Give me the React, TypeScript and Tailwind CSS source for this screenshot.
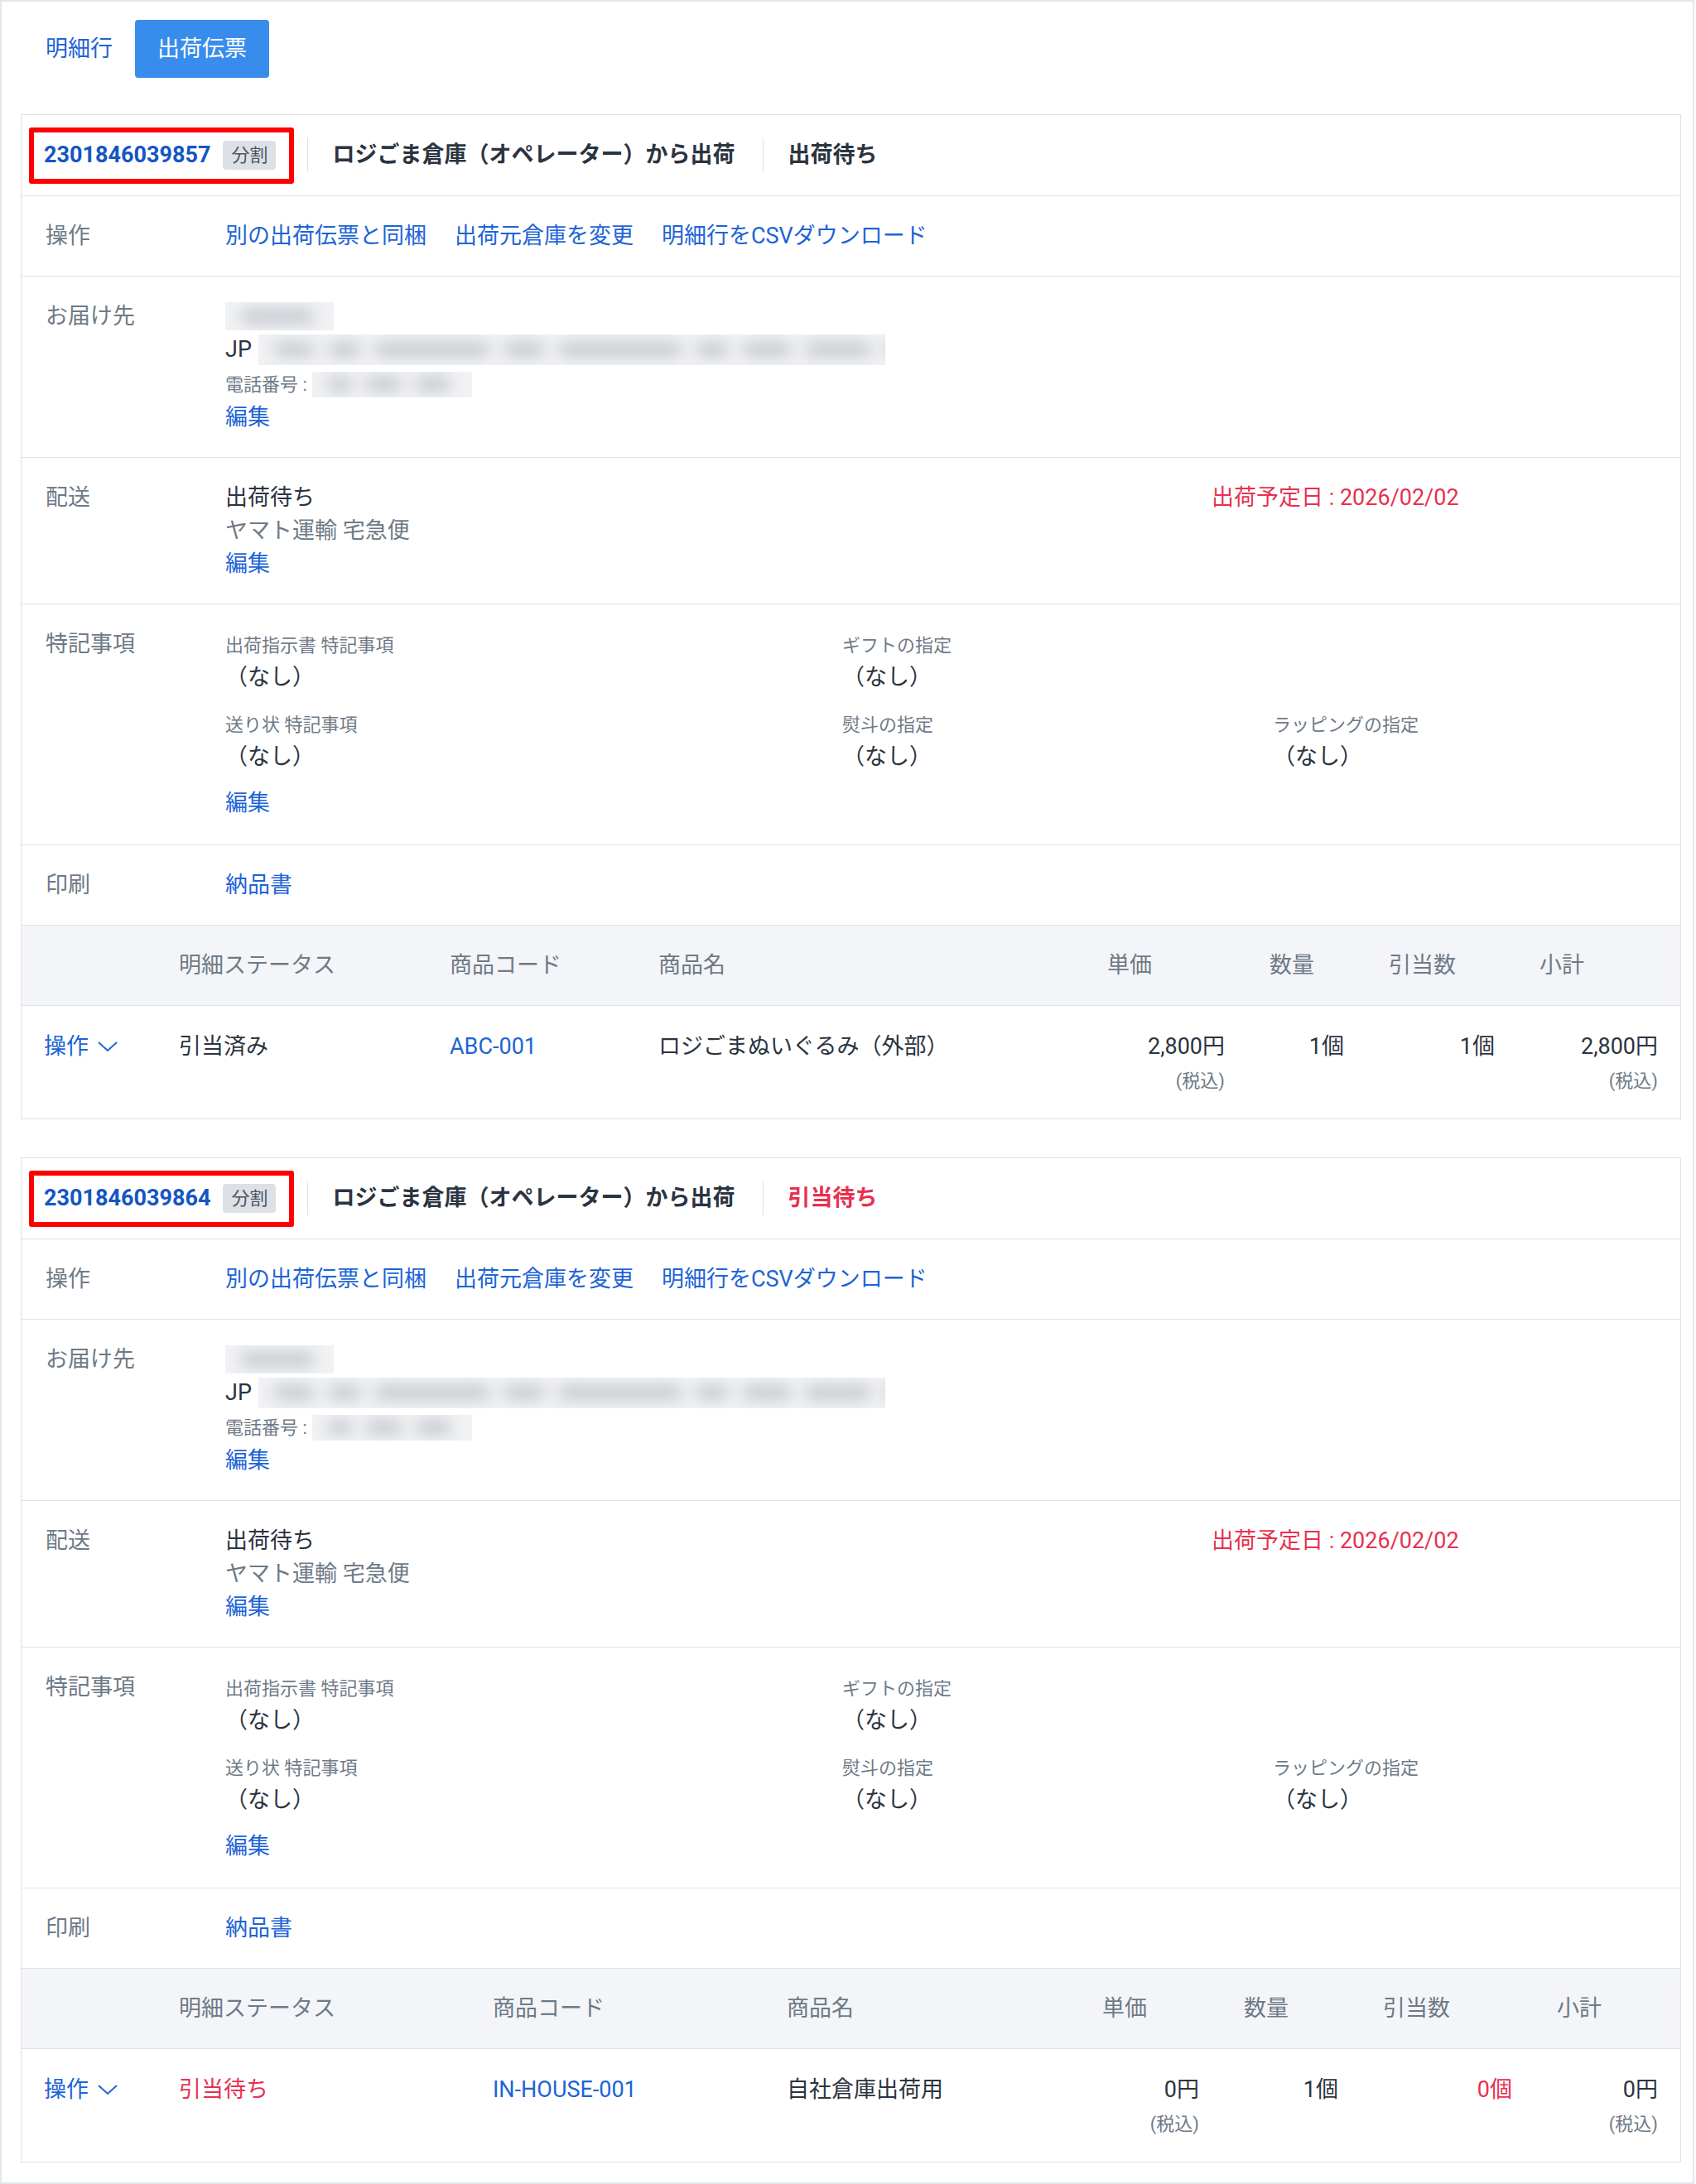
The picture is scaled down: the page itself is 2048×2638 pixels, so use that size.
import React from 'react';

// 出荷伝票タブ：分割された出荷伝票の一覧

type LineItem = {
  status: string;
  statusRed?: boolean;
  code: string;
  name: string;
  price: string;
  qty: string;
  alloc: string;
  allocRed?: boolean;
  subtotal: string;
};

type Shipment = {
  id: string;
  warehouse: string;
  state: string;
  stateRed?: boolean;
  cols: string;
  item: LineItem;
};

const shipments: Shipment[] = [
  {
    id: '2301846039857',
    warehouse: 'ロジごま倉庫（オペレーター）から出荷',
    state: '出荷待ち',
    cols: 'grid-cols-[163px_327px_252px_542px_196px_144px_182px_1fr]',
    item: {
      status: '引当済み',
      code: 'ABC-001',
      name: 'ロジごまぬいぐるみ（外部）',
      price: '2,800円',
      qty: '1個',
      alloc: '1個',
      subtotal: '2,800円',
    },
  },
  {
    id: '2301846039864',
    warehouse: 'ロジごま倉庫（オペレーター）から出荷',
    state: '引当待ち',
    stateRed: true,
    cols: 'grid-cols-[163px_379px_355px_381px_171px_168px_210px_1fr]',
    item: {
      status: '引当待ち',
      statusRed: true,
      code: 'IN-HOUSE-001',
      name: '自社倉庫出荷用',
      price: '0円',
      qty: '1個',
      alloc: '0個',
      allocRed: true,
      subtotal: '0円',
    },
  },
];

const Row: React.FC<{ label: string; children: React.ReactNode }> = ({ label, children }) => (
  <div className="flex border-b border-[#dfe3e8] px-[29px] py-[28px]">
    <div className="w-[217px] shrink-0 text-[27px] leading-[40px] text-[#6e7a87]">{label}</div>
    <div className="min-w-0 flex-1">{children}</div>
  </div>
);

const Edit = () => <div className="text-[27px] leading-[40px] text-[#1d64d6]">編集</div>;

// ぼかし（個人情報）: 地の矩形はくっきり、中の文字だけぼかす
const Blur: React.FC<{ w: string; h: string; bars: number[] }> = ({ w, h, bars }) => (
  <div className={`flex items-center gap-[16px] overflow-hidden bg-[#f1f2f4] px-[18px] ${w} ${h}`}>
    {bars.map((b, i) => (
      <div key={i} className="h-[18px] shrink-0 rounded-full bg-[#c6cad0] blur-[9px]" style={{ width: b }} />
    ))}
  </div>
);

const Note: React.FC<{ title: string }> = ({ title }) => (
  <div>
    <div className="text-[22px] leading-[36px] text-[#6e7a87]">{title}</div>
    <div className="text-[27px] leading-[40px] text-[#2b3440]">（なし）</div>
  </div>
);

const Chevron = () => (
  <svg width="26" height="14" viewBox="0 0 26 14" fill="none" stroke="currentColor" strokeWidth="2">
    <polyline points="2,2 13,12 24,2" />
  </svg>
);

const ShipmentCard: React.FC<{ s: Shipment }> = ({ s }) => {
  const it = s.item;
  return (
    <div className="border border-[#dde1e6] bg-white">
      {/* ヘッダー */}
      <div className="flex h-[98px] items-center border-b border-[#dfe3e8] px-[9px]">
        <div className="flex h-[68px] items-center rounded-[3px] border-[6px] border-[#ff0000] pl-[12px] pr-[16px]">
          <span className="text-[27px] font-bold text-[#1456c2]">{s.id}</span>
          <span className="ml-[15px] rounded-[4px] bg-[#dde1e6] px-[10px] text-[22px] leading-[35px] text-[#4b5563]">分割</span>
        </div>
        <div className="ml-[16px] h-[41px] w-px bg-[#dfe3e8]" />
        <span className="ml-[29px] text-[27px] font-bold text-[#2b3440]">{s.warehouse}</span>
        <div className="ml-[34px] h-[41px] w-px bg-[#dfe3e8]" />
        <span className={`ml-[29px] text-[27px] font-bold ${s.stateRed ? 'text-[#e8304f]' : 'text-[#2b3440]'}`}>{s.state}</span>
      </div>

      <Row label="操作">
        <div className="flex gap-[34px] text-[27px] leading-[40px] text-[#1d64d6]">
          <span>別の出荷伝票と同梱</span>
          <span>出荷元倉庫を変更</span>
          <span>明細行をCSVダウンロード</span>
        </div>
      </Row>

      <Row label="お届け先">
        <div className="flex h-[40px] items-center">
          <Blur w="w-[131px]" h="h-[34px]" bars={[90]} />
        </div>
        <div className="flex h-[40px] items-center text-[27px] text-[#2b3440]">
          <span>JP</span>
          <div className="ml-[8px]">
            <Blur w="w-[757px]" h="h-[37px]" bars={[50, 40, 140, 50, 150, 40, 60, 80, 60]} />
          </div>
        </div>
        <div className="mt-[2px] flex h-[40px] items-center text-[22px] text-[#6e7a87]">
          <span>電話番号 :</span>
          <div className="ml-[6px]">
            <Blur w="w-[193px]" h="h-[31px]" bars={[30, 44, 44]} />
          </div>
        </div>
        <Edit />
      </Row>

      <Row label="配送">
        <div className="grid grid-cols-[1191px_1fr]">
          <div>
            <div className="text-[27px] leading-[40px] text-[#2b3440]">出荷待ち</div>
            <div className="text-[27px] leading-[40px] text-[#6e7a87]">ヤマト運輸 宅急便</div>
            <Edit />
          </div>
          <div className="text-[27px] leading-[40px] text-[#e8304f]">出荷予定日 : 2026/02/02</div>
        </div>
      </Row>

      <Row label="特記事項">
        <div className="pt-[4px] pb-[2px]">
          <div className="grid grid-cols-[745px_520px_1fr]">
            <Note title="出荷指示書 特記事項" />
            <Note title="ギフトの指定" />
            <div />
          </div>
          <div className="mt-[20px] grid grid-cols-[745px_520px_1fr]">
            <Note title="送り状 特記事項" />
            <Note title="熨斗の指定" />
            <Note title="ラッピングの指定" />
          </div>
          <div className="mt-[16px]">
            <Edit />
          </div>
        </div>
      </Row>

      <Row label="印刷">
        <div className="text-[27px] leading-[40px] text-[#1d64d6]">納品書</div>
      </Row>

      {/* 明細テーブル */}
      <div className={`grid ${s.cols} border-b border-[#dfe3e8] bg-[#f4f5f8] py-[28px] text-[27px] leading-[40px] text-[#6e7a87]`}>
        <div className="px-[27px]" />
        <div className="px-[27px]">明細ステータス</div>
        <div className="px-[27px]">商品コード</div>
        <div className="px-[27px]">商品名</div>
        <div className="px-[27px]">単価</div>
        <div className="px-[27px]">数量</div>
        <div className="px-[27px]">引当数</div>
        <div className="px-[27px]">小計</div>
      </div>
      <div className={`grid ${s.cols} pt-[29px] pb-[27px] text-[27px] leading-[40px] text-[#2b3440]`}>
        <div className="flex h-[40px] items-center gap-[10px] self-start px-[27px] text-[#1d64d6]">
          <span>操作</span>
          <Chevron />
        </div>
        <div className={`px-[27px] ${it.statusRed ? 'text-[#e8304f]' : ''}`}>{it.status}</div>
        <div className="px-[27px] text-[#1d64d6]">{it.code}</div>
        <div className="px-[27px]">{it.name}</div>
        <div className="px-[27px] text-right">
          <div>{it.price}</div>
          <div className="mt-[4px] text-[22px] leading-[36px] text-[#6e7a87]">(税込)</div>
        </div>
        <div className="px-[27px] text-right">{it.qty}</div>
        <div className={`px-[27px] text-right ${it.allocRed ? 'text-[#e8304f]' : ''}`}>{it.alloc}</div>
        <div className="px-[27px] text-right">
          <div>{it.subtotal}</div>
          <div className="mt-[4px] text-[22px] leading-[36px] text-[#6e7a87]">(税込)</div>
        </div>
      </div>
    </div>
  );
};

export default function App() {
  return (
    <div className="min-h-[2638px] w-[2046px] border-2 border-[#e3e6ea] bg-white pl-[23px] pr-[14px] pt-[22px] pb-[20px] font-['Roboto','Noto_Sans_CJK_JP',sans-serif]">
      {/* タブ */}
      <div className="ml-[3px] flex">
        <button className="h-[70px] rounded-[4px] px-[27px] text-[27px] text-[#1d64d6]">明細行</button>
        <button className="h-[70px] rounded-[4px] bg-[#388dec] px-[27px] text-[27px] text-white">出荷伝票</button>
      </div>

      <div className="mt-[44px] flex flex-col gap-[46px]">
        {shipments.map(s => (
          <ShipmentCard key={s.id} s={s} />
        ))}
      </div>
    </div>
  );
}
